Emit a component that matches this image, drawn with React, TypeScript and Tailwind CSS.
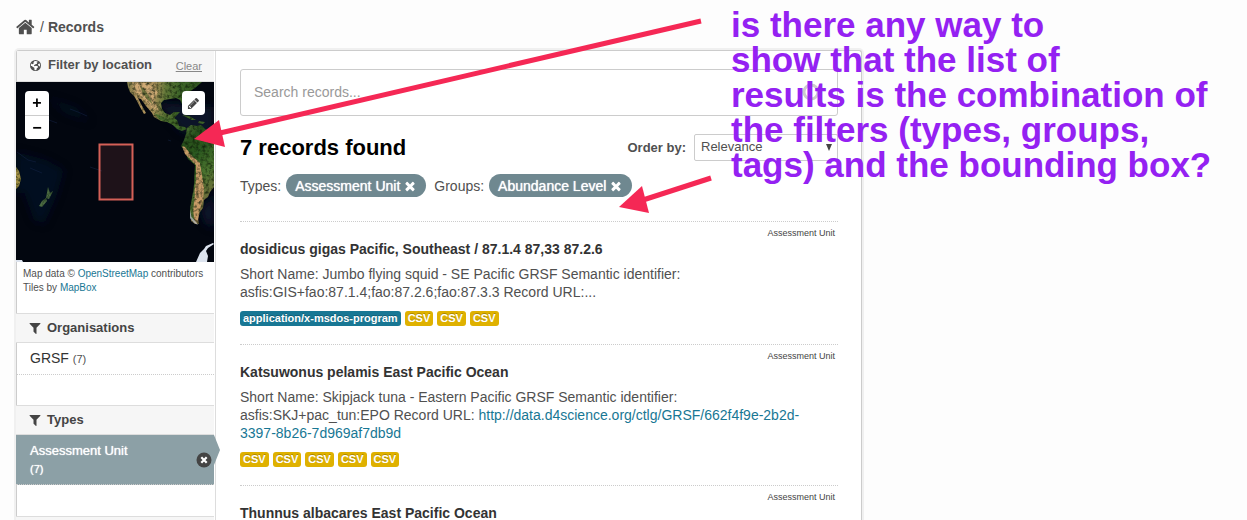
import type { ReactNode } from "react";

const ICONS = {
  home: "M1408 992v480q0 26-19 45t-45 19h-384v-384h-256v384h-384q-26 0-45-19t-19-45v-480q0-1 .5-3t.5-3l575-474 575 474q1 2 1 6zm223-69l-62 74q-8 9-21 11h-3q-13 0-21-7l-692-577-692 577q-12 8-24 7-13-2-21-11l-62-74q-8-10-7-23.5t11-21.5l719-599q32-26 76-26t76 26l244 204v-195q0-14 9-23t23-9h192q14 0 23 9t9 23v408l219 182q10 8 11 21.5t-7 23.5z",
  filter: "M1595 295q17 41-14 70l-493 493v742q0 42-39 59-13 5-25 5-27 0-45-19l-256-256q-19-19-19-45v-486l-493-493q-31-29-14-70 17-39 59-39h1280q42 0 59 39z",
  pencil: "M491 1536l91-91-235-235-91 91v107h128v128h107zm523-928q0-22-22-22-10 0-17 7l-542 542q-7 7-7 17 0 22 22 22 10 0 17-7l542-542q7-7 7-17zm-54-192l416 416-832 832h-416v-416zm683 96q0 53-37 90l-166 166-416-416 166-165q36-38 90-38 53 0 91 38l235 234q37 39 37 91z",
  times: "M1490 1322q0 40-28 68l-136 136q-28 28-68 28t-68-28l-294-294-294 294q-28 28-68 28t-68-28l-136-136q-28-28-28-68t28-68l294-294-294-294q-28-28-28-68t28-68l136-136q28-28 68-28t68 28l294 294 294-294q28-28 68-28t68 28l136 136q28 28 28 68t-28 68l-294 294 294 294q28 28 28 68z",
};

function Icon({ name, className }: { name: keyof typeof ICONS; className: string }) {
  return (
    <svg viewBox="0 0 1792 1792" fill="currentColor" className={className} aria-hidden="true">
      <path d={ICONS[name]} />
    </svg>
  );
}

function GlobeIcon({ className }: { className: string }) {
  return (
    <svg viewBox="0 0 24 24" className={className} aria-hidden="true">
      <circle cx="12" cy="12" r="12" fill="currentColor" />
      <path
        fill="#fff"
        d="M12 2.2L8.5 2.8L9.5 4.5L7 6L8 8L5.5 9.5L3 7.5Q1.5 10 1.8 13L4.5 13L6 15.5L9 16.5L10 20L9.5 22Q12 22.5 14 22L14.5 18.5L17.5 16L17 13.5L13 12.5L10 13.5L8.5 11.5L12 9L15.5 8L14.5 5.5L17.5 4.5Q15 2.3 12 2.2ZM20 7.5L17.5 9L18 12L20.5 13L21.5 15.5Q22.8 11 21 7.5Z"
      />
    </svg>
  );
}

function FacetHeading({ children }: { children: ReactNode }) {
  return (
    <h2 className="-ml-px flex h-[30px] items-center gap-1 border-y border-[#ddd] bg-[#f6f6f6] pl-3 text-[13px] font-bold text-[#444]">
      <Icon name="filter" className="size-[14px]" />
      <span className="pl-px">{children}</span>
    </h2>
  );
}

function SatelliteMap() {
  return (
    <svg viewBox="0 0 198 180" preserveAspectRatio="xMaxYMid slice" className="block h-[180px] w-full" role="img" aria-label="Map">
      <defs>
        <linearGradient id="north" gradientUnits="userSpaceOnUse" x1="111" y1="5" x2="182" y2="12">
          <stop offset="0" stopColor="#7d7a48" />
          <stop offset="0.15" stopColor="#b3955f" />
          <stop offset="0.38" stopColor="#a98f5a" />
          <stop offset="0.55" stopColor="#5f7636" />
          <stop offset="0.75" stopColor="#3c6428" />
          <stop offset="1" stopColor="#31561f" />
        </linearGradient>
        <linearGradient id="south" x1="0" y1="0" x2="0.3" y2="1">
          <stop offset="0" stopColor="#5e8440" />
          <stop offset="0.2" stopColor="#284f1d" />
          <stop offset="0.4" stopColor="#2c5a20" />
          <stop offset="0.65" stopColor="#4d7530" />
          <stop offset="1" stopColor="#7d6b40" />
        </linearGradient>
        <filter id="soft" x="-20%" y="-20%" width="140%" height="140%">
          <feGaussianBlur stdDeviation="0.5" />
        </filter>
        <filter id="haze" x="-20%" y="-20%" width="140%" height="140%">
          <feGaussianBlur stdDeviation="4" />
        </filter>
        <filter id="grain" x="0" y="0" width="100%" height="100%" colorInterpolationFilters="sRGB">
          <feTurbulence type="fractalNoise" baseFrequency="0.3" numOctaves="3" seed="4" result="n" />
          <feColorMatrix in="n" type="matrix" values="0 0 0 0 0.05  0 0 0 0 0.1  0 0 0 0 0.03  1.8 0 0 0 -0.75" result="m" />
          <feComposite in="m" in2="SourceGraphic" operator="in" result="g" />
          <feMerge>
            <feMergeNode in="SourceGraphic" />
            <feMergeNode in="g" />
          </feMerge>
        </filter>
      </defs>
      <rect width="198" height="180" fill="#02060f" />
      <g filter="url(#haze)" fill="#0a1733">
        <path d="M0 70L30 78L48 88L40 115L28 142L18 138L8 110L0 112Z" opacity="0.5" />
        <path d="M30 15L60 25L75 40L50 32Z" opacity="0.35" />
        <path d="M140 20L198 25V52L166 50Z" opacity="0.7" />
        <path d="M184 130L198 110V146L190 142Z" opacity="0.8" />
      </g>
      <path
        stroke="#18294e"
        fill="none"
        opacity="0.45"
        d="M54 27L62 30L71 34M33 38L41 41M1 70L12 78L20 80M14 86L26 91M152 58L155 59M74 85L86 89"
      />
      <g filter="url(#grain)">
        <g filter="url(#soft)">
          <path
            fill="url(#north)"
            d="M111 0L112 5L114 10L118 14L121 19L124 25L128 32L130 31L125 22L122 16L125 17L130 24L136 31L138 35L145 39L151 40L157 43L161 47L166 49L171 47L169 45L163 44L161 38L158 36L164 30L158 30L154 33L149 31L146 27L145 21L148 18L154 17L160 16L164 18L167 24L169 22L168 16L173 10L179 6L186 0Z"
          />
          <path fill="#d9b27c" opacity="0.75" d="M116 0L131 1L142 10L138 18L143 29L136 26L130 19L124 13L118 9Z" />
          <path fill="#5d6a35" opacity="0.8" d="M124 4L129 8L134 16L137 23L132 18L127 12Z" />
          <path fill="#456a2c" opacity="0.9" d="M138 31L145 34L152 37L158 37L163 45L168 48L160 45L153 40L144 38Z" />
          <path
            fill="url(#south)"
            d="M171 46L175 43L181 44L185 43L189 47L198 51V105L194 110L192 115L188 118L187 126L184 130L182 137L183 142L179 142L175 139L174 127L177 115L178 102L179 83L172 77L168 68L165 64L168 58L170 52Z"
          />
          <path fill="#c69a66" d="M166 64L169 72L175 78L180 83L180 98L178 115L177 129L179 139L182 139L183 129L187 118L188 106L186 93L184 81L176 74L169 65Z" />
          <path fill="#48682f" d="M177 110L179 112L177 129L178 138L175 137L174 127Z" />
          <path fill="#3c6028" d="M166 33L173 34L180 38L176 38L170 35Z" />
          <path fill="#3c6028" d="M183 39L189 40L187 42L182 41Z" />
          <path fill="#4b6b42" d="M32 105L34 111L37 109L33 117L30 116ZM30 116L31 119L26 125L23 124L26 119Z" />
          <path fill="#a08f45" d="M0 85L3 89L5 97L3 104L0 107Z" />
        </g>
      </g>
      <g fill="#dce3ee" filter="url(#soft)">
        <path d="M180 180L184 171L188 167L190 164L197 161L198 162L192 166L190 169L192 174L191 180Z" />
        <path d="M0 178L6 178L7 180H0Z" />
        <path opacity="0.6" d="M174 128L175.500 135L180 140L182 143L178 141L174 136Z" />
      </g>
      <rect x="83.5" y="62.5" width="33" height="55" fill="#f06f64" fillOpacity="0.12" stroke="#eb6a5f" strokeOpacity="0.9" strokeWidth="2" />
    </svg>
  );
}

function Pill({ children }: { children: ReactNode }) {
  return (
    <span className="flex h-[23px] items-center gap-[3px] rounded-full bg-[#6f8890] px-[9px] text-sm text-white [text-shadow:0_0_1px_#fff]">
      {children}
      <button type="button" aria-label="Remove" className="block">
        <Icon name="times" className="size-[14px]" />
      </button>
    </span>
  );
}

function Tag({ blue = false, children }: { blue?: boolean; children: ReactNode }) {
  return (
    <li
      className={
        (blue ? "bg-[#187794]" : "bg-[#dfb100]") +
        " flex h-[15px] items-center rounded-[3px] px-[3px] text-[11px] font-bold text-white [text-shadow:0_-1px_0_rgba(0,0,0,0.25)]"
      }
    >
      {children}
    </li>
  );
}

function RecordItem({ title, children, tags }: { title: string; children?: ReactNode; tags?: string[] }) {
  return (
    <li className="relative border-t border-dotted border-[#ccc] pt-[18px] pb-[18px]">
      <span className="absolute top-1 right-[3px] text-[9px] leading-[14px] text-[#444]">Assessment Unit</span>
      <h3 className="text-sm leading-[18px] font-bold text-[#333]">{title}</h3>
      {children && <p className="mt-[7px] text-sm leading-[18px]">{children}</p>}
      {tags && (
        <ul className="mt-[10px] flex gap-1">
          {tags.map((t, i) => (
            <Tag key={i} blue={t !== "CSV"}>
              {t}
            </Tag>
          ))}
        </ul>
      )}
    </li>
  );
}

export default function App() {
  return (
    <div className="relative flex h-screen flex-col overflow-hidden bg-[#fdfdfd] pl-4 font-['Liberation_Sans',Arial,sans-serif] text-[#505050]">
      <nav className="flex h-[50px] shrink-0 items-center gap-1 pt-1 text-sm" aria-label="Breadcrumb">
        <a href="#home" aria-label="Home">
          <Icon name="home" className="size-5" />
        </a>
        <span>/</span>
        <a href="#records" className="font-bold">
          Records
        </a>
      </nav>

      <div className="flex w-full max-w-[846px] flex-1 rounded-t-[3px] border border-b-0 border-[#ccc] bg-white shadow-[0_0_0_2px_rgba(0,0,0,0.05)]">
        <aside className="w-[198px] shrink-0">
          <div className="mr-px">
            <div className="flex h-[31px] items-center border-b border-[#ddd] bg-[#f6f6f6] pr-3 pb-px pl-[13px]">
              <GlobeIcon className="size-[11px]" />
              <h2 className="flex-1 pb-px pl-[7px] text-[13px] font-bold text-[#505050]">Filter by location</h2>
              <a href="#clear" className="pt-px text-[11px] text-[#888] underline">
                Clear
              </a>
            </div>
            <div className="relative -ml-px">
              <SatelliteMap />
              <div className="absolute top-[9px] left-[9px] flex w-6 flex-col overflow-hidden rounded bg-white">
                <button type="button" className="h-[25px] border-b border-[#ccc] text-base leading-6 font-bold text-black" aria-label="Zoom in">
                  +
                </button>
                <button type="button" className="h-[23px] text-base leading-5 font-bold text-black" aria-label="Zoom out">
                  −
                </button>
              </div>
              <button type="button" aria-label="Edit area" className="absolute top-[9px] right-[9px] flex h-6 w-[23px] items-center justify-center rounded bg-white text-[#444]">
                <Icon name="pencil" className="size-[13px]" />
              </button>
            </div>
            <p className="h-[51px] pt-[5px] pl-[6px] text-[10px] leading-[14px] whitespace-nowrap">
              Map data © <a href="#osm" className="text-[#187794]">OpenStreetMap</a> contributors
              <br />
              Tiles by <a href="#mapbox" className="text-[#187794]">MapBox</a>
            </p>
            <FacetHeading>Organisations</FacetHeading>
            <div className="h-[62px]">
              <a href="#grsf" className="block h-8 border-b border-dotted border-[#ccc] pl-[13px] text-sm leading-[31px] text-[#333]">
                GRSF <span className="text-[11px] text-[#505050]">(7)</span>
              </a>
            </div>
            <FacetHeading>Types</FacetHeading>
            <div className="h-[81px]">
              <a
                href="#assessment-unit"
                className="relative -ml-px block h-[50px] border-b border-dotted border-[#ccc] bg-[#8ca0a6] pt-[7px] pl-[14px] text-[13px] leading-[18px] text-white [text-shadow:0_0_1px_#fff]"
              >
                Assessment Unit
                <span className="block text-[11px]">(7)</span>
                <svg viewBox="0 0 6 30" className="absolute top-0 -right-[6px] h-[30px] w-[6px]" fill="#8ca0a6" aria-hidden="true">
                  <path d="M0 0L6 15L0 30Z" />
                </svg>
                <svg viewBox="0 0 16 16" className="absolute top-[17px] right-[2px] size-4" aria-hidden="true">
                  <circle cx="8" cy="8" r="7.5" fill="#444" />
                  <path d="M5.3 5.3L10.7 10.7M10.7 5.3L5.3 10.7" stroke="#fff" strokeWidth="2.2" />
                </svg>
              </a>
            </div>
            <div className="-ml-px h-4 border-t border-[#ddd] bg-[#f6f6f6]" />
          </div>
        </aside>

        <main className="min-w-0 flex-1 border-l border-[#ddd] pt-[18px] pr-[23px] pl-6">
          <div className="relative">
            <input
              type="search"
              aria-label="Search records"
              placeholder="Search records..."
              className="block h-[47px] w-full rounded-[3px] border border-[#ccc] bg-white px-[13px] pb-px text-sm placeholder:text-[#999]"
            />
            <svg viewBox="0 0 20 20" className="absolute top-[13px] right-[17px] size-5" fill="none" stroke="#ccc" strokeWidth="3" aria-hidden="true">
              <circle cx="10" cy="10" r="7" />
            </svg>
          </div>

          <div className="mt-[18px] flex h-[27px] items-center">
            <h1 className="flex-1 text-[22px] font-bold text-black">7 records found</h1>
            <label htmlFor="order" className="mr-2 text-[13px] font-bold">
              Order by:
            </label>
            <div className="relative w-36">
              <select id="order" className="block h-[27px] w-full appearance-none rounded-[2px] border border-[#ccc] bg-white pb-px pl-[6px] text-[13px]">
                <option>Relevance</option>
              </select>
              <svg viewBox="0 0 6 7" className="absolute top-[10px] right-[6px] h-[7px] w-[6px]" fill="#444" aria-hidden="true">
                <path d="M0 0H6L3 7Z" />
              </svg>
            </div>
          </div>

          <div className="mt-[13px] mb-6 flex items-center text-sm">
            <span className="mr-[5px]">Types:</span>
            <Pill>Assessment Unit</Pill>
            <span className="mr-[5px] ml-2">Groups:</span>
            <Pill>Abundance Level</Pill>
          </div>

          <ul>
            <RecordItem title="dosidicus gigas Pacific, Southeast / 87.1.4 87,33 87.2.6" tags={["application/x-msdos-program", "CSV", "CSV", "CSV"]}>
              Short Name: Jumbo flying squid - SE Pacific GRSF Semantic identifier:
              <br />
              asfis:GIS+fao:87.1.4;fao:87.2.6;fao:87.3.3 Record URL:...
            </RecordItem>
            <RecordItem title="Katsuwonus pelamis East Pacific Ocean" tags={["CSV", "CSV", "CSV", "CSV", "CSV"]}>
              Short Name: Skipjack tuna - Eastern Pacific GRSF Semantic identifier:
              <br />
              asfis:SKJ+pac_tun:EPO Record URL:{" "}
              <a href="#record" className="text-[#187794]">
                http://data.d4science.org/ctlg/GRSF/662f4f9e-2b2d-
                <br />
                3397-8b26-7d969af7db9d
              </a>
            </RecordItem>
            <RecordItem title="Thunnus albacares East Pacific Ocean" />
          </ul>
        </main>
      </div>

      <svg viewBox="0 0 720 220" className="pointer-events-none absolute top-0 left-0 h-[220px] w-[720px]" fill="#f52855" stroke="#f52855" aria-hidden="true">
        <path d="M701 21L220 133" strokeWidth="5" />
        <path d="M194 139L219 120L225 147Z" stroke="none" />
        <path d="M711 178L643 200" strokeWidth="5" />
        <path d="M619 207L642 186L649 213Z" stroke="none" />
      </svg>
      <p className="pointer-events-none absolute top-[7px] left-[731px] text-[35px] leading-[35px] font-bold whitespace-nowrap text-[#9421f2]">
        is there any way to
        <br />
        show that the list of
        <br />
        results is the combination of
        <br />
        the filters (types, groups,
        <br />
        tags) and the bounding box?
      </p>
    </div>
  );
}
